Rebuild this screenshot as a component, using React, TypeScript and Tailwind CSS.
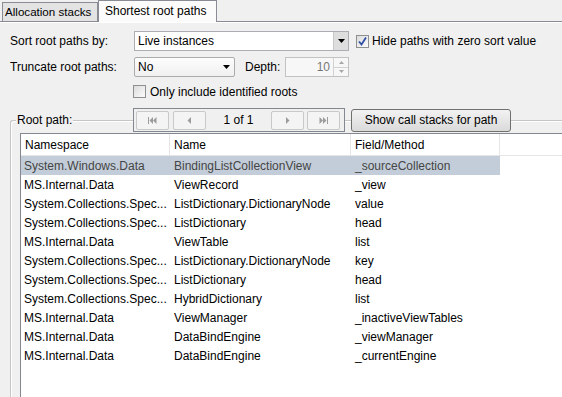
import React from "react";

const rows: [string, string, string][] = [
  ["System.Windows.Data", "BindingListCollectionView", "_sourceCollection"],
  ["MS.Internal.Data", "ViewRecord", "_view"],
  ["System.Collections.Spec...", "ListDictionary.DictionaryNode", "value"],
  ["System.Collections.Spec...", "ListDictionary", "head"],
  ["MS.Internal.Data", "ViewTable", "list"],
  ["System.Collections.Spec...", "ListDictionary.DictionaryNode", "key"],
  ["System.Collections.Spec...", "ListDictionary", "head"],
  ["System.Collections.Spec...", "HybridDictionary", "list"],
  ["MS.Internal.Data", "ViewManager", "_inactiveViewTables"],
  ["MS.Internal.Data", "DataBindEngine", "_viewManager"],
  ["MS.Internal.Data", "DataBindEngine", "_currentEngine"],
];

function Checkbox({ checked }: { checked?: boolean }) {
  return (
    <div className="w-[13px] h-[13px] shrink-0 border border-[#8e8f8f] bg-gradient-to-br from-[#dcdcdc] to-[#fbfbfb] flex items-center justify-center">
      {checked && (
        <svg width="11" height="11" viewBox="0 0 11 11">
          <path d="M2 5.5 L4.5 8.5 L9 1.5" fill="none" stroke="#2d4ea3" strokeWidth="1.8" />
        </svg>
      )}
    </div>
  );
}

function DownArrow({ color = "#000" }: { color?: string }) {
  return (
    <svg width="7" height="4" viewBox="0 0 7 4">
      <path d="M0 0 H7 L3.5 4 Z" fill={color} />
    </svg>
  );
}

function NavButton({ kind }: { kind: "first" | "prev" | "next" | "last" }) {
  const c = "#9c9c9c";
  return (
    <div className="w-[33px] h-[19px] shrink-0 border border-[#c9c9c9] rounded-[2px] bg-[#f4f4f4] flex items-center justify-center">
      <svg width="9" height="7" viewBox="0 0 9 7">
        {kind === "first" && (
          <g fill={c}>
            <rect x="0" y="0" width="1" height="7" />
            <path d="M5 0 V7 L1.5 3.5 Z" />
            <path d="M8.5 0 V7 L5 3.5 Z" />
          </g>
        )}
        {kind === "prev" && <path d="M6 0 V7 L2.5 3.5 Z" fill={c} />}
        {kind === "next" && <path d="M3 0 V7 L6.5 3.5 Z" fill={c} />}
        {kind === "last" && (
          <g fill={c}>
            <path d="M0.5 0 V7 L4 3.5 Z" />
            <path d="M4 0 V7 L7.5 3.5 Z" />
            <rect x="8" y="0" width="1" height="7" />
          </g>
        )}
      </svg>
    </div>
  );
}

export default function App() {
  return (
    <div className="w-[562px] h-[397px] overflow-hidden bg-[#f0f0f0] text-[12px] leading-none text-black font-['Liberation_Sans',Arial,sans-serif] flex flex-col select-none whitespace-nowrap">
      {/* Tabs */}
      <div className="h-[22px] shrink-0 flex items-end pl-[2px] border-b border-[#898c95]">
        <div className="h-[19px] w-[96px] flex items-center pl-[2px] text-[11.6px] border border-b-0 border-[#898c95] bg-[#e3e3e3]">
          Allocation stacks
        </div>
        <div className="h-[22px] w-[119px] -mb-px flex items-center pl-[6px] pb-[2px] border border-b-0 border-[#898c95] bg-[#fbfbfb]">
          Shortest root paths
        </div>
      </div>

      {/* Panel */}
      <div className="flex-1 flex flex-col pl-[10px] pt-[8px] border-t border-white min-h-0">
        <div className="h-[20px] flex items-center">
          <span className="w-[124px] shrink-0">Sort root paths by:</span>
          <div className="w-[215px] h-[20px] shrink-0 border border-[#abadb3] bg-white flex items-center">
            <span className="flex-1 pl-[3px]">Live instances</span>
            <div className="w-[15px] h-full border-l border-[#c8c8c8] bg-[#dedede] flex items-center justify-center">
              <DownArrow />
            </div>
          </div>
          <div className="ml-[7px]">
            <Checkbox checked />
          </div>
          <span className="ml-[3px]">Hide paths with zero sort value</span>
        </div>

        <div className="h-[20px] mt-[6px] flex items-center">
          <span className="w-[124px] shrink-0">Truncate root paths:</span>
          <div className="w-[101px] h-[20px] shrink-0 border border-[#acacac] rounded-[2px] bg-gradient-to-b from-[#fdfdfd] to-[#f0f0f0] flex items-center pl-[3px] pr-[4px]">
            <span className="flex-1">No</span>
            <DownArrow />
          </div>
          <span className="w-[50px] shrink-0 pl-[10px]">Depth:</span>
          <div className="w-[64px] h-[20px] shrink-0 border border-[#c2c2c2] bg-[#f7f7f7] flex items-center">
            <span className="flex-1 text-right pr-[3px] text-[#777]">10</span>
            <div className="w-[15px] h-full border-l border-[#d2d2d2] flex flex-col">
              <div className="flex-1 flex items-center justify-center border-b border-[#d2d2d2]">
                <svg width="5" height="3" viewBox="0 0 5 3"><path d="M0 3 H5 L2.5 0 Z" fill="#a8a8a8" /></svg>
              </div>
              <div className="flex-1 flex items-center justify-center">
                <svg width="5" height="3" viewBox="0 0 5 3"><path d="M0 0 H5 L2.5 3 Z" fill="#a8a8a8" /></svg>
              </div>
            </div>
          </div>
        </div>

        <div className="h-[13px] mt-[8px] flex items-center pl-[123px]">
          <Checkbox />
          <span className="ml-[4px]">Only include identified roots</span>
        </div>

        {/* Root path group */}
        <div className="mt-[22px] flex-1 flex flex-col border-t border-l border-[#c6c6c6] rounded-tl-[3px] shadow-[inset_1px_1px_0_#ffffff] min-h-0">
          <div className="-mt-[13px] h-[24px] shrink-0 flex items-center">
            <div className="w-[122px] shrink-0 pl-[5px]">
              <span className="bg-[#f0f0f0] px-[1px]">Root path:</span>
            </div>
            <div className="w-[212px] h-[24px] shrink-0 border border-[#828790] bg-[#f0f0f0] flex items-center pl-[2px]">
              <NavButton kind="first" />
              <div className="w-[4px]" />
              <NavButton kind="prev" />
              <span className="w-[65px] text-center">1 of 1</span>
              <NavButton kind="next" />
              <div className="w-[3px]" />
              <NavButton kind="last" />
            </div>
            <button className="ml-[6px] w-[160px] h-[23px] shrink-0 border border-[#707070] rounded-[3px] bg-gradient-to-b from-[#f2f2f2] to-[#dadada] flex items-center justify-center">
              Show call stacks for path
            </button>
          </div>

          {/* Table */}
          <div className="mt-[1px] ml-[9px] flex-1 border-l border-t border-[#828790] bg-white flex flex-col">
            <div className="h-[22px] shrink-0 flex border-b border-[#e5e5e5]">
              <div className="w-[149px] shrink-0 flex items-center pl-[4px] border-r border-[#e5e5e5]">Namespace</div>
              <div className="w-[181px] shrink-0 flex items-center pl-[4px] border-r border-[#e5e5e5]">Name</div>
              <div className="w-[149px] shrink-0 flex items-center pl-[4px] border-r border-[#e5e5e5]">Field/Method</div>
              <div className="flex-1" />
            </div>
            {rows.map((r, i) => (
              <div
                key={i}
                className={`w-[479px] h-[19px] shrink-0 flex items-center ${i === 0 ? "bg-[#c3cdd9] text-[#454545]" : ""}`}
              >
                <span className="w-[149px] shrink-0 pl-[3px]">{r[0]}</span>
                <span className="w-[181px] shrink-0 pl-[4px]">{r[1]}</span>
                <span className="flex-1 pl-[4px]">{r[2]}</span>
              </div>
            ))}
          </div>
        </div>
      </div>
    </div>
  );
}
